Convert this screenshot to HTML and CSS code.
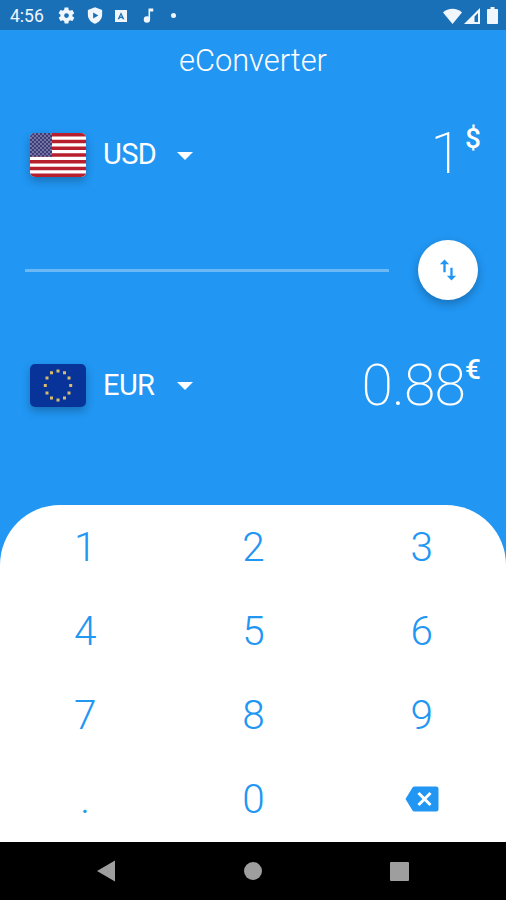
FILE: index.html
```html
<!DOCTYPE html>
<html lang="en">
<head>
    <meta charset="UTF-8">
    <meta name="viewport" content="width=device-width, initial-scale=1.0">
    <title>eConverter</title>
    <link rel="stylesheet" href="styles.css">
</head>
<body>
    <!-- Status bar -->
    <div class="status-bar">
        <div class="status-time">4:56</div>
        <div class="status-icons">
            <svg width="19" height="19" viewBox="0 0 24 24"><path d="M19.4 13c0-.3.1-.6.1-1s0-.7-.1-1l2.1-1.6c.2-.2.2-.4.1-.6l-2-3.5c-.1-.2-.4-.3-.6-.2l-2.5 1c-.5-.4-1.1-.7-1.7-1l-.4-2.6c0-.3-.2-.5-.5-.5h-4c-.3 0-.5.2-.5.5l-.4 2.6c-.6.3-1.2.6-1.7 1l-2.5-1c-.2-.1-.5 0-.6.2l-2 3.5c-.1.2-.1.5.1.6L4.500 11c0 .3-.1.6-.1 1s0 .7.1 1l-2.1 1.6c-.2.2-.2.4-.1.6l2 3.5c.1.2.4.3.6.2l2.5-1c.5.4 1.1.7 1.700 1l.4 2.600c0 .3.2.5.5.5h4c.3 0 .5-.2.5-.5l.4-2.600c.6-.3 1.200-.6 1.700-1l2.500 1c.2.1.5 0 .6-.2l2-3.500c.1-.2.1-.5-.1-.6zM12 15a3 3 0 1 1 0-6 3 3 0 0 1 0 6z"/></svg>
            <svg width="18" height="19" viewBox="0 0 24 24"><path fill-rule="evenodd" d="M12 1 2.500 4.500V11c0 5.500 4 10.200 9.500 12 5.500-1.800 9.500-6.500 9.500-12V4.500zM9.500 8l7 4-7 4z"/></svg>
            <svg width="16" height="16" viewBox="0 0 24 24"><path fill-rule="evenodd" d="M3 3h18v18H3zM12 6.500 7 17h2.500l.8-2h3.400l.8 2H17zM12 10l1 3h-2z"/></svg>
            <svg width="19" height="19" viewBox="0 0 24 24"><path d="M12 3v10.600c-.6-.4-1.300-.6-2-.6a4 4 0 1 0 4 4V7h4V3z"/></svg>
            <span class="status-dot"></span>
        </div>
        <div class="status-signals">
            <svg width="19" height="16" viewBox="0 0 19 16"><path d="M0 4.500C5-.5 14-.5 19 4.500L9.500 16z"/></svg>
            <svg width="16" height="16" viewBox="0 0 16 16"><path fill-rule="evenodd" d="M0 16 16 0v16zM10.500 8.500v5.500h3.500V5z"/></svg>
            <svg class="battery" width="11" height="17" viewBox="0 0 11 17"><path d="M3.500 0h4v2H10c.6 0 1 .4 1 1v13c0 .6-.4 1-1 1H1c-.6 0-1-.4-1-1V3c0-.6.4-1 1-1h2.500z"/></svg>
        </div>
    </div>

    <div class="title">eConverter</div>

    <!-- From currency -->
    <div class="currency-row from">
        <svg class="flag" width="56" height="44" viewBox="0 0 56 44">
            <defs>
                <pattern id="stars" width="4" height="4" patternUnits="userSpaceOnUse">
                    <rect width="4" height="4" fill="#3d3b78"/>
                    <circle cx="1" cy="1" r=".75" fill="#c9c8de"/>
                    <circle cx="3" cy="3" r=".75" fill="#c9c8de"/>
                </pattern>
            </defs>
            <rect width="56" height="44" fill="#fff"/>
            <path stroke="#b71f2d" stroke-width="3.385" d="M0 1.690h56M0 8.460h56M0 15.230h56M0 22h56M0 28.770h56M0 35.540h56M0 42.310h56"/>
            <rect width="22" height="23.700" fill="url(#stars)"/>
        </svg>
        <div class="code">USD</div>
        <div class="arrow"></div>
        <div class="amount">1</div>
        <div class="symbol">$</div>
    </div>

    <!-- Swap -->
    <div class="swap-row">
        <div class="divider"></div>
        <div class="swap-btn">
            <svg width="28" height="28" viewBox="0 0 24 24"><path d="M9 3 5 7h3v7h2V7h3zM16 17v-7h-2v7h-3l4 4 4-4z"/></svg>
        </div>
    </div>

    <!-- To currency -->
    <div class="currency-row to">
        <svg class="flag" width="56" height="43" viewBox="0 0 56 43">
            <rect width="56" height="43" fill="#083399"/>
            <path fill="#d9bb6c" d="M26.500 5.500h3v3h-3zM33 7.200h3v3h-3zM37.500 12.500h3v3h-3zM39.200 20h3v3h-3zM37.500 27.500h3v3h-3zM33 32.500h3v3h-3zM26.500 34.500h3v3h-3zM20 32.500h3v3h-3zM15.500 27.500h3v3h-3zM13.800 20h3v3h-3zM15.500 12.500h3v3h-3zM20 7.200h3v3h-3z"/>
        </svg>
        <div class="code">EUR</div>
        <div class="arrow"></div>
        <div class="amount">0.88</div>
        <div class="symbol">€</div>
    </div>

    <!-- Keypad -->
    <div class="keypad">
        <div class="key">1</div>
        <div class="key">2</div>
        <div class="key">3</div>
        <div class="key">4</div>
        <div class="key">5</div>
        <div class="key">6</div>
        <div class="key">7</div>
        <div class="key">8</div>
        <div class="key">9</div>
        <div class="key">.</div>
        <div class="key">0</div>
        <div class="key">
            <svg width="34" height="26" viewBox="0 0 34 26"><path fill="#2196f3" d="M9.500.5H31a2.500 2.500 0 0 1 2.500 2.500v20a2.500 2.500 0 0 1-2.500 2.500H9.500c-.9 0-1.500-.4-2-1.100L.5 13l7-11.400C8 .9 8.600.5 9.500.5z"/><path stroke="#fff" stroke-width="3" d="m13.500 7 12 12m0-12-12 12"/></svg>
        </div>
    </div>

    <!-- Navigation bar -->
    <div class="nav-bar">
        <svg width="18" height="22" viewBox="0 0 18 22"><path d="M18 .5v21L0 11z"/></svg>
        <div class="nav-home"></div>
        <div class="nav-recent"></div>
    </div>
</body>
</html>
```
FILE: styles.css
```css
* { margin: 0; padding: 0; box-sizing: border-box; }
body { font-family: Roboto, sans-serif; background: #2196f3; color: white; height: 900px; display: flex; flex-direction: column; overflow: hidden; }
svg { display: block; flex-shrink: 0; }

.status-bar { height: 30px; background: #1a70b7; display: flex; align-items: center; padding: 1px 8px 0 10px; fill: #f0f6fc; }
.status-time { font-size: 17.5px; width: 47px; color: #f0f6fc; }
.status-icons { display: flex; align-items: center; gap: 9.5px; }
.status-dot { width: 5px; height: 5px; border-radius: 50%; background: #f0f6fc; margin-left: 4px; }
.status-signals { display: flex; align-items: center; gap: 2px; margin-left: auto; }
.battery { margin-left: 5px; }

.title { height: 60px; line-height: 62px; text-align: center; font-size: 30.8px; font-weight: 300; }

.currency-row { height: 130px; display: flex; align-items: center; padding: 0 25px 0 30px; }
.flag { border-radius: 5px; box-shadow: 0 4px 8px rgba(0,0,0,0.25); }
.code { font-size: 29px; letter-spacing: -0.6px; width: 74px; margin-left: 17px; }
.arrow { border: 8px solid transparent; border-top-color: white; border-bottom: 0; margin-top: 2px; }
.amount { margin-left: auto; font-size: 57px; font-weight: 200; letter-spacing: -0.8px; }
.symbol { font-size: 28px; font-weight: 500; line-height: 34px; margin-bottom: 32px; }
.from .code { margin-top: -2px; }
.from .amount { margin: -3px 4px 0 auto; }
.to .symbol { margin-bottom: 30px; }

.swap-row { height: 100px; display: flex; align-items: center; padding: 0 28px 0 25px; }
.divider { flex: 1; height: 3px; background: #6bb8f7; margin-right: 29px; }
.swap-btn { width: 60px; height: 60px; border-radius: 50%; background: white; fill: #2196f3; display: flex; align-items: center; justify-content: center; box-shadow: 0 4px 10px rgba(0,0,0,0.25); }

.keypad { height: 337px; margin-top: auto; background: white; border-radius: 60px 60px 0 0; display: grid; grid-template-columns: repeat(3, 1fr); grid-template-rows: repeat(4, 84px); padding-left: 1px; }
.key { display: flex; align-items: center; justify-content: center; font-size: 40.5px; font-weight: 300; color: #2196f3; }

.nav-bar { height: 58px; background: black; fill: #9e9e9e; display: flex; align-items: center; padding: 0 97px; justify-content: space-between; }
.nav-home { width: 18px; height: 18px; border-radius: 50%; background: #9e9e9e; }
.nav-recent { width: 19px; height: 19px; border-radius: 1px; background: #9e9e9e; }
```
